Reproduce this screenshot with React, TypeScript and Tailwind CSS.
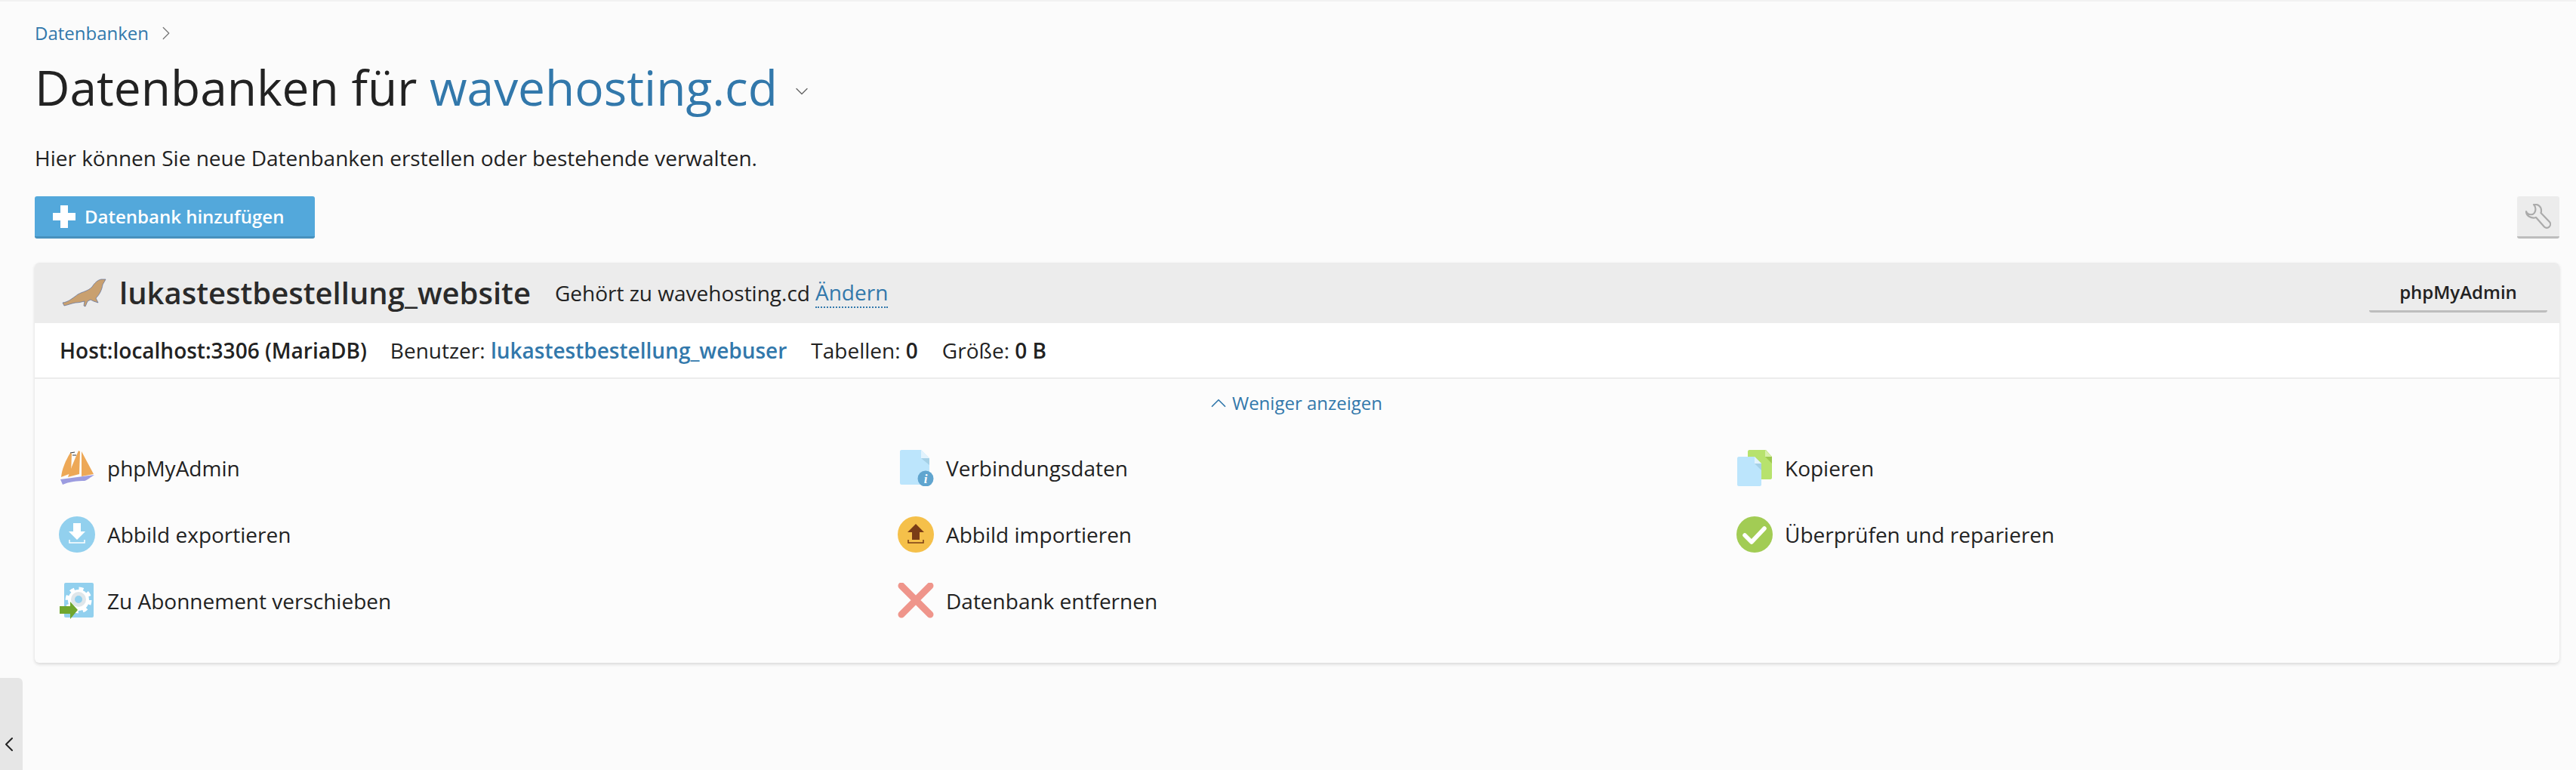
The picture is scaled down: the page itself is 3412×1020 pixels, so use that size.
import { ChevronDown, ChevronLeft, ChevronRight, ChevronUp } from "lucide-react";

const Seal = () => (
  <svg width="62" height="40" viewBox="0 0 62 40">
    <path d="M3 33 C10 32 15 28 23 22 C30 18 36 18 42 12 C45 7 49 3 54 2 L60 2 L56 9 C55 16 52 22 47 27 L50 33 L44 31 L40 29 L36 31 L33 38 L31 37 L32 31 C28 32 24 33 20 33 C14 34 10 36 5 37 Z" fill="#c9a06f" stroke="#5b6f9c" strokeWidth="1" strokeOpacity="0.7" />
  </svg>
);

const ShipIcon = () => (
  <svg width="46" height="46" viewBox="0 0 46 46">
    <path d="M14 3 L16 4 L15 30 L2 35 C3 24 8 13 14 3 Z" fill="#eda857" />
    <path d="M25 0 L27 1 L26 31 L11 35 C15 23 20 11 25 0 Z" fill="#eda857" />
    <path d="M29 1 L45 31 L29 34 Z" fill="#eda857" />
    <path d="M1 38 L46 32 C41 35 37 39 33 40 C24 40 12 41 4 45 Z" fill="#9c9ce0" />
    <path d="M14 3 L20 2 M17 6 L22 6" stroke="#333" strokeWidth="1" />
  </svg>
);

const ExportIcon = () => (
  <svg width="48" height="48" viewBox="0 0 48 48">
    <circle cx="24" cy="24" r="24" fill="#92d0ee" />
    <path d="M19 9 H29 V20 H35 L24 31 L13 20 H19 Z" fill="#fff" />
    <path d="M14 31 V35 H34 V31" fill="none" stroke="#fff" strokeWidth="1.5" />
  </svg>
);

const ImportIcon = () => (
  <svg width="48" height="48" viewBox="0 0 48 48">
    <circle cx="24" cy="24" r="24" fill="#f5c04a" />
    <path d="M24 10 L35 21 H29 V31 H19 V21 H13 Z" fill="#7a3c16" />
    <path d="M14 31 V35 H34 V31" fill="none" stroke="#7a3c16" strokeWidth="1.5" />
  </svg>
);

const MoveIcon = () => (
  <svg width="46" height="48" viewBox="0 0 46 48">
    <rect x="6" y="0" width="39" height="46" rx="2" fill="#92d0ee" />
    <circle cx="25" cy="23" r="14" fill="none" stroke="#fff" strokeWidth="7" strokeDasharray="5.5 5.5" />
    <circle cx="25" cy="23" r="14" fill="#fff" />
    <circle cx="25" cy="22" r="10" fill="#dfe6ea" />
    <circle cx="25" cy="22" r="5" fill="#92d0ee" />
    <path d="M0 31 H14 V25 L24 36 L14 48 V41 H0 Z" fill="#70a62e" />
  </svg>
);

const InfoFileIcon = () => (
  <svg width="48" height="48" viewBox="0 0 48 48">
    <path d="M5 0 H31 L42 11 V46 H5 C4 46 3 45 3 44 V2 C3 1 4 0 5 0 Z" fill="#bce5fc" />
    <path d="M31 0 L42 11 H31 Z" fill="#e2f3fd" />
    <path d="M31 11 H42 V20 Z" fill="#a5d0e6" />
    <circle cx="37" cy="38" r="10.5" fill="#60a5cf" />
    <text x="37" y="44" textAnchor="middle" fill="#fff" fontSize="17" fontWeight="700" fontStyle="italic" fontFamily="'Liberation Serif', serif">i</text>
  </svg>
);

const CopyIcon = () => (
  <svg width="48" height="48" viewBox="0 0 48 48">
    <path d="M17 0 H39 L47 9 V37 C47 38 46 39 45 39 H17 C16 39 15 38 15 37 V2 C15 1 16 0 17 0 Z" fill="#b7e26d" />
    <path d="M38 0 L47 9 H38 Z" fill="#d8efac" />
    <path d="M38 9 H47 V18 Z" fill="#9dc94f" />
    <path d="M3 9 H24 L33 18 V46 C33 47 32 48 31 48 H3 C2 48 1 47 1 46 V11 C1 10 2 9 3 9 Z" fill="#bce5fc" />
    <path d="M24 9 L33 18 H24 Z" fill="#e2f3fd" />
    <path d="M24 18 H33 V27 Z" fill="#a5d0e6" />
  </svg>
);

const CheckIcon = () => (
  <svg width="48" height="48" viewBox="0 0 48 48">
    <circle cx="24" cy="24" r="24" fill="#a2cc54" />
    <path d="M11 25 L20 34 L37 16" fill="none" stroke="#fff" strokeWidth="5.5" strokeLinecap="round" strokeLinejoin="round" />
  </svg>
);

const RemoveIcon = () => (
  <svg width="48" height="48" viewBox="0 0 48 48">
    <path d="M5 3 L43 41 M43 3 L5 41" fill="none" stroke="#ef958b" strokeWidth="9" strokeLinecap="round" transform="translate(0 1)" />
  </svg>
);

const WrenchIcon = () => (
  <svg width="34" height="34" viewBox="0 0 34 34" fill="none" stroke="#ababab" strokeWidth="2.2" strokeLinejoin="round">
    <path d="M11 1 C16 0 21 3 21 9 C21 10 21 11 20.5 12 L32 24 C34 26 33 29 31.5 30.5 C30 32 27 32.5 25 30.5 L14 18 C8 20 1 16 1 10 L2 12 C5 15 10 15 12 12 C14 9 14 4 11 1 Z" />
  </svg>
);

const actions = [
  { icon: <ShipIcon />, label: "phpMyAdmin" },
  { icon: <InfoFileIcon />, label: "Verbindungsdaten" },
  { icon: <CopyIcon />, label: "Kopieren" },
  { icon: <ExportIcon />, label: "Abbild exportieren" },
  { icon: <ImportIcon />, label: "Abbild importieren" },
  { icon: <CheckIcon />, label: "Überprüfen und reparieren" },
  { icon: <MoveIcon />, label: "Zu Abonnement verschieben" },
  { icon: <RemoveIcon />, label: "Datenbank entfernen" },
];

export default function App() {
  return (
    <div className="relative h-[1020px] overflow-hidden bg-[#fbfbfb] border-t-2 border-[#f2f2f2] pl-[46px] pr-[22px] text-[28px] leading-[40px] text-[#222] font-['Open_Sans',sans-serif]">
      <div className="flex items-center gap-[8px] pt-[26px] h-[58px] text-[24px] text-[#3278ab]">
        <a>Datenbanken</a>
        <ChevronRight size={30} strokeWidth={1} className="text-[#777]" />
      </div>

      <div className="flex items-center mt-[14px] h-[84px]">
        <h1 className="text-[64px] leading-[84px] font-normal">
          Datenbanken für <span className="text-[#3278ab]">wavehosting.cd</span>
        </h1>
        <ChevronDown size={28} strokeWidth={1.2} className="ml-[18px] mt-[10px] text-[#666]" />
      </div>

      <p className="mt-[31px]">Hier können Sie neue Datenbanken erstellen oder bestehende verwalten.</p>

      <div className="flex justify-between mt-[31px]">
        <button className="flex items-center w-[371px] h-[56px] pl-[24px] rounded-[3px] bg-[#53a8db] border-b-[3px] border-[#4791bd] text-[24px] font-semibold text-white">
          <svg width="30" height="30" viewBox="0 0 30 30" className="mr-[12px]">
            <path d="M10 0 H20 V10 H30 V20 H20 V30 H10 V20 H0 V10 H10 Z" fill="#fff" />
          </svg>
          Datenbank hinzufügen
        </button>
        <button className="flex items-center justify-center w-[56px] h-[56px] rounded-[3px] bg-[#ececec] border-b-[3px] border-[#bdbdbd]">
          <WrenchIcon />
        </button>
      </div>

      <div className="mt-[32px] h-[530px] rounded-[6px] bg-[#fcfcfc] shadow-[0_2px_4px_rgba(0,0,0,0.14)] overflow-hidden">
        <div className="flex items-center h-[80px] bg-[#ececec] pl-[34px] pr-[16px]">
          <Seal />
          <span className="ml-[16px] text-[40px] font-semibold text-[#2a2a2a]">lukastestbestellung_website</span>
          <span className="ml-[32px]">Gehört zu wavehosting.cd</span>
          <a className="ml-[7px] text-[#3278ab] border-b-2 border-dotted border-[#3278ab] leading-[38px]">Ändern</a>
          <button className="ml-auto w-[236px] h-[52px] rounded-[3px] border-b-[3px] border-[#bdbdbd] text-[24px] font-semibold">
            phpMyAdmin
          </button>
        </div>

        <div className="flex items-center h-[74px] bg-white border-b-2 border-[#ececec] pl-[33px]">
          <span className="font-semibold">Host:localhost:3306 (MariaDB)</span>
          <span className="ml-[31px]">
            Benutzer: <a className="font-semibold text-[#3278ab]">lukastestbestellung_webuser</a>
          </span>
          <span className="ml-[32px]">
            Tabellen: <b className="font-semibold">0</b>
          </span>
          <span className="ml-[32px]">
            Größe: <b className="font-semibold">0 B</b>
          </span>
        </div>

        <div className="flex items-center justify-center h-[64px] text-[24px] text-[#3278ab]">
          <ChevronUp size={34} strokeWidth={1.2} className="-ml-[8px] mr-[1px]" />
          Weniger anzeigen
        </div>

        <div className="grid grid-cols-[repeat(3,1111px)] auto-rows-[88px] pl-[32px] pt-[10px]">
          {actions.map((a) => (
            <div key={a.label} className="flex items-center">
              <span className="flex items-center justify-center w-[48px] h-[48px] mr-[16px]">{a.icon}</span>
              {a.label}
            </div>
          ))}
        </div>
      </div>

      <div className="absolute left-0 bottom-0 w-[30px] h-[122px] rounded-tr-[6px] bg-[#e6e6e6] flex items-end pb-[18px]">
        <ChevronLeft size={32} strokeWidth={1.5} className="-ml-[4px] shrink-0 text-[#222]" />
      </div>
    </div>
  );
}
